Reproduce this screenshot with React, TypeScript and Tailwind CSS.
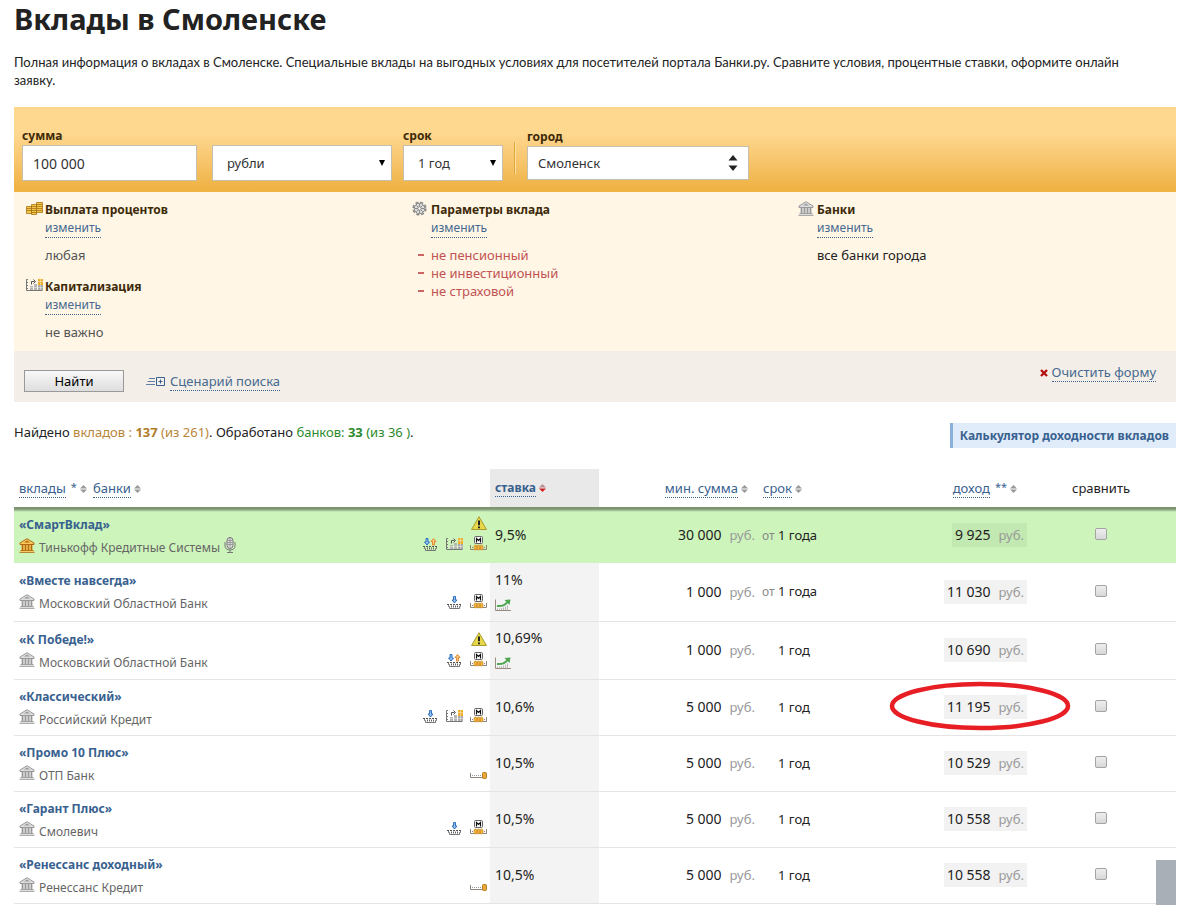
import { useState } from 'react';
import type { ReactNode } from 'react';

type Badge = 'refill' | 'refillWithdraw' | 'capital' | 'monthly' | 'atEnd';

interface Deposit {
  id: number;
  name: string;
  bank: string;
  badges: Badge[];
  warning?: boolean;
  rate: string;
  growing?: boolean;
  minSum: string;
  from?: boolean;
  term: string;
  income: string;
  special?: boolean;
  circled?: boolean;
}

const deposits: Deposit[] = [
  { id: 1, name: '«СмартВклад»', bank: 'Тинькофф Кредитные Системы', badges: ['refillWithdraw', 'capital', 'monthly'], warning: true, rate: '9,5%', minSum: '30 000', from: true, term: '1 года', income: '9 925', special: true },
  { id: 2, name: '«Вместе навсегда»', bank: 'Московский Областной Банк', badges: ['refill', 'monthly'], rate: '11%', growing: true, minSum: '1 000', from: true, term: '1 года', income: '11 030' },
  { id: 3, name: '«К Победе!»', bank: 'Московский Областной Банк', badges: ['refillWithdraw', 'monthly'], warning: true, rate: '10,69%', growing: true, minSum: '1 000', term: '1 год', income: '10 690' },
  { id: 4, name: '«Классический»', bank: 'Российский Кредит', badges: ['refill', 'capital', 'monthly'], rate: '10,6%', minSum: '5 000', term: '1 год', income: '11 195', circled: true },
  { id: 5, name: '«Промо 10 Плюс»', bank: 'ОТП Банк', badges: ['atEnd'], rate: '10,5%', minSum: '5 000', term: '1 год', income: '10 529' },
  { id: 6, name: '«Гарант Плюс»', bank: 'Смолевич', badges: ['refill', 'monthly'], rate: '10,5%', minSum: '5 000', term: '1 год', income: '10 558' },
  { id: 7, name: '«Ренессанс доходный»', bank: 'Ренессанс Кредит', badges: ['atEnd'], rate: '10,5%', minSum: '5 000', term: '1 год', income: '10 558' },
];

export default function App() {
  const [sum, setSum] = useState('100 000');
  const [compared, setCompared] = useState<number[]>([]);

  const toggle = (id: number) =>
    setCompared(list => (list.includes(id) ? list.filter(x => x !== id) : [...list, id]));

  return (
    <div className="bg-white pl-3.5 pr-0.5 text-[13px] leading-[18px] text-[#222]" style={{ fontFamily: "'Noto Sans', 'Open Sans', sans-serif" }}>
      <h1 className="text-[29px] leading-[38px] font-bold">Вклады в Смоленске</h1>
      <p className="mt-[15px]" style={{ fontFamily: "Lato, 'Noto Sans', sans-serif" }}>
        Полная информация о вкладах в Смоленске. Специальные вклады на выгодных условиях для посетителей портала Банки.ру. Сравните условия, процентные ставки, оформите онлайн
        <br />
        заявку.
      </p>

      <form className="mt-[18px]" onSubmit={e => e.preventDefault()}>
        {/* Main filters */}
        <div className="flex h-[85px] items-end bg-linear-to-b from-[#ffd890] from-30% to-[#efb344] to-95% pb-[11px] pl-2">
          <Field id="sum" label="сумма">
            <input
              id="sum"
              value={sum}
              onChange={e => setSum(e.target.value)}
              className="block h-9 w-[175px] border border-[#c4bfae] bg-white pl-2.5 text-[14px] text-[#333]"
            />
          </Field>
          <div className="ml-[15px]">
            <Picker id="currency" label="валюта" options={['рубли', 'доллары', 'евро']} className="w-[180px]" />
          </div>
          <div className="ml-[11px]">
            <Field id="term" label="срок">
              <Picker id="term" options={['1 год', '2 года', '3 года']} className="w-[100px]" />
            </Field>
          </div>
          <div className="mr-[11px] ml-[11px] mb-[7px] h-8 w-0.5 border-l border-[#e2a73c] bg-[#ffe1a0]" />
          <Field id="city" label="город">
            <div className="relative mb-px">
              <select id="city" className="block h-[34px] w-[222px] appearance-none border border-[#c4bfae] bg-white pl-2.5 text-[#333]">
                <option>Смоленск</option>
                <option>Москва</option>
              </select>
              <svg className="pointer-events-none absolute top-[9px] right-[11px]" width="10" height="16" viewBox="0 0 10 16" fill="#222">
                <path d="M5 0 9.500 5.500H.5zM.5 10.500h9L5 16z" />
              </svg>
            </div>
          </Field>
        </div>

        {/* Extra filters */}
        <div className="grid grid-cols-3 bg-[#fff6e6] pt-[9px] pr-1 pb-2.5">
          <div className="pl-3">
            <Filter icon={<CoinsIcon />} title="Выплата процентов">
              <p className="text-[#555]">любая</p>
            </Filter>
            <div className="mt-[14px]">
              <Filter icon={<CapitalIcon />} title="Капитализация">
                <p className="text-[#555]">не важно</p>
              </Filter>
            </div>
          </div>
          <div className="pl-3">
            <Filter icon={<GearIcon />} title="Параметры вклада">
              <ul className="text-[#c25353]">
                {['не пенсионный', 'не инвестиционный', 'не страховой'].map(item => (
                  <li key={item} className="-ml-[13px] flex items-center">
                    <span className="mr-[7px] h-0.5 w-1.5 bg-[#c96565]" />
                    {item}
                  </li>
                ))}
              </ul>
            </Filter>
          </div>
          <div className="pl-3">
            <Filter icon={<BankIcon />} title="Банки">
              <p>все банки города</p>
            </Filter>
          </div>
        </div>

        <div className="flex h-[51px] items-start bg-[#f3efe8] pr-5 pl-2.5">
          <button type="submit" className="mt-[19px] h-[22px] w-[100px] border border-[#999] bg-linear-to-b from-[#f8f8f8] to-[#dedede] leading-5 text-black">
            Найти
          </button>
          <div className="mt-[21px] ml-[22px] flex items-center gap-1">
            <ScenarioIcon />
            <DottedLink>Сценарий поиска</DottedLink>
          </div>
          <div className="mt-3 ml-auto flex items-center gap-1">
            <svg width="8" height="8" viewBox="0 0 8 8" stroke="#b51010" strokeWidth="2.400">
              <path d="M1 1 7 7M7 1 1 7" />
            </svg>
            <DottedLink>Очистить форму</DottedLink>
          </div>
        </div>
      </form>

      <div className="mt-[21px] flex items-start justify-between">
        <p>
          Найдено <span className="text-[#b9853a]">вкладов : <b className="text-[#b07d2a]">137</b> (из 261)</span>. Обработано{' '}
          <span className="text-[#2c8a2c]">банков: <b>33</b> (из 36 )</span>.
        </p>
        <a href="#calculator" className="border-l-3 border-[#8cb0dd] bg-[#e1ecfb] pt-px pr-[7px] pl-[7px] text-[12px] leading-6 font-bold text-[#38618f]">
          Калькулятор доходности вкладов
        </a>
      </div>

      <table className="mt-[21px] w-full table-fixed border-collapse">
        <colgroup>
          <col />
          <col className="w-[76px]" />
          <col className="w-[109px]" />
          <col className="w-[161px]" />
          <col className="w-[130px]" />
          <col className="w-[137px]" />
          <col className="w-[149px]" />
        </colgroup>
        <thead>
          <tr className="h-[38px] text-left">
            <th className="pl-[5px] font-normal" colSpan={2}>
              <SortLink mark="*">вклады</SortLink>
              <span className="ml-1.5"><SortLink>банки</SortLink></span>
            </th>
            <th className="bg-[#e9e9e9] pl-[5px] text-[12px] font-bold"><SortLink active>ставка</SortLink></th>
            <th className="pr-3 text-right font-normal"><SortLink>мин. сумма</SortLink></th>
            <th className="pl-[3px] font-normal"><SortLink>срок</SortLink></th>
            <th className="pr-2.5 text-right font-normal"><SortLink mark="**">доход</SortLink></th>
            <th className="pr-px text-center font-normal">сравнить</th>
          </tr>
        </thead>
        <tbody>
          {deposits.map(d => (
            <tr
              key={d.id}
              className={
                d.special
                  ? 'h-14 bg-[#cdf5bb] bg-linear-to-b from-[#7d9473] from-[2px] to-[#cdf5bb] to-[5px]'
                  : d.growing
                    ? 'h-[58px] border-b border-[#e4e4e4]'
                    : 'h-14 border-b border-[#e4e4e4]'
              }
            >
              <td className={`pl-[5px] align-top ${d.growing || d.special ? 'pt-[9px]' : 'pt-2'}`}>
                <a href={`#deposit-${d.id}`} className="block w-fit text-[12px] font-bold text-[#38618f]">{d.name}</a>
                <div className="mt-1 flex h-5 items-center gap-1 text-[12px] whitespace-nowrap text-[#666]">
                  <span className="mb-1.5"><BankIcon gold={d.special} /></span>
                  {d.bank}
                  {d.special && <span className="mb-1.5"><MicIcon /></span>}
                </div>
              </td>
              <td className="pr-[3px] pb-3 align-bottom">
                <div className="flex flex-col items-end gap-1.5">
                  {d.warning && <WarningIcon />}
                  <div className="flex items-end gap-[7px]">
                    {d.badges.map(b => <BadgeIcon key={b} type={b} />)}
                  </div>
                </div>
              </td>
              <td className={d.special ? 'pl-[5px] text-[14px]' : 'bg-[#f3f3f3] pl-[5px] text-[14px]'}>
                <div>{d.rate}</div>
                {d.growing && <GrowthIcon />}
              </td>
              <td className="pr-[5px] text-right">
                <span className="text-[14px]">{d.minSum}</span>
                <span className="ml-2 text-[#999]">руб.</span>
              </td>
              <td className="whitespace-nowrap">
                <span className="inline-block w-[18px] pl-0.5 text-[12px] text-[#888]">{d.from && 'от'}</span>
                {d.term}
              </td>
              <td className="text-right">
                <span className={`relative inline-block p-[3px] leading-[17px] ${d.special ? 'bg-[#c2e9b1]' : 'bg-[#f2f2f2]'}`}>
                  <span className="text-[14px]">{d.income}</span>
                  <span className="ml-2 text-[#999]">руб.</span>
                  {d.circled && (
                    <svg className="pointer-events-none absolute -top-[14px] -right-11" width="182" height="50" viewBox="0 0 182 50" fill="none">
                      <ellipse cx="91" cy="25" rx="88" ry="22" stroke="#e81e25" strokeWidth="4.500" />
                    </svg>
                  )}
                </span>
              </td>
              <td className="pr-0.5 text-center">
                <input
                  type="checkbox"
                  aria-label={`Сравнить ${d.name}`}
                  checked={compared.includes(d.id)}
                  onChange={() => toggle(d.id)}
                  className="inline-block h-3 w-3 appearance-none rounded-xs border border-[#a3a3a3] bg-linear-to-b from-[#eee] to-[#d8d8d8] checked:bg-[#38618f]"
                />
              </td>
            </tr>
          ))}
        </tbody>
      </table>

      <div className="fixed right-0.5 bottom-px h-[45px] w-5 bg-[#a9afb7]" />
    </div>
  );
}

function Field({ id, label, children }: { id: string; label: string; children: ReactNode }) {
  return (
    <div>
      <label htmlFor={id} className="block text-[12px] leading-[18px] font-bold text-[#3d2a08]">{label}</label>
      {children}
    </div>
  );
}

function Picker({ id, label, options, className }: { id: string; label?: string; options: string[]; className: string }) {
  return (
    <div className={`relative ${className}`}>
      <select id={id} aria-label={label} className="block h-9 w-full appearance-none border border-[#c4bfae] bg-white pl-3.5 text-[#333]">
        {options.map(o => <option key={o}>{o}</option>)}
      </select>
      <svg className="pointer-events-none absolute top-[15px] right-[7px]" width="6" height="6" viewBox="0 0 6 6">
        <path d="M0 0h6L3 6z" />
      </svg>
    </div>
  );
}

function Filter({ icon, title, children }: { icon: ReactNode; title: string; children: ReactNode }) {
  return (
    <div className="flex">
      <div className="w-[19px] shrink-0">{icon}</div>
      <div>
        <h2 className="text-[12px] font-bold text-[#3d2a08]">{title}</h2>
        <div className="text-[12px]"><DottedLink>изменить</DottedLink></div>
        <div className="mt-2">{children}</div>
      </div>
    </div>
  );
}

function DottedLink({ children }: { children: ReactNode }) {
  return (
    <a href="#form" className="block w-fit border-b border-dotted border-[#38618f] leading-[18px] text-[#47698f]">{children}</a>
  );
}

function SortLink({ children, mark, active }: { children: ReactNode; mark?: string; active?: boolean }) {
  return (
    <span className="inline-flex items-center gap-[3px] text-[#38618f]">
      <a href="#sort" className="border-b border-dotted border-[#38618f] leading-[17px]">{children}</a>
      {mark && <span className="mb-1 ml-0.5 text-[11px] leading-[13px]">{mark}</span>}
      <svg width="7" height="8" viewBox="0 0 7 8">
        <path d="M3.500 0 7 3.500H0z" fill={active ? '#b98d8d' : '#999'} />
        <path d="M0 4.500h7L3.500 8z" fill={active ? '#cc2222' : '#999'} />
      </svg>
    </span>
  );
}

function BankIcon({ gold }: { gold?: boolean }) {
  const line = gold ? '#b06a10' : '#999';
  const fill = gold ? '#f8c85c' : '#ddd';
  return (
    <svg width="16" height="15" viewBox="0 0 16 15">
      <path d="M8 .7 15 5v1.500H1V5z" fill={fill} stroke={line} />
      <path d="M5 4.500 8 2.600l3 1.900z" fill={line} />
      <path d="M2.500 7h11v5h-11z" fill={fill} />
      <path d="M3.500 7v5M6.500 7v5M9.500 7v5M12.500 7v5" stroke={line} strokeWidth="1.500" />
      <path d="M1.500 12.500h13M.5 14.300h15" stroke={line} />
      <path d="M1 13.400h14" stroke={fill} />
    </svg>
  );
}

function MicIcon() {
  return (
    <svg width="12" height="16" viewBox="0 0 12 16" fill="none" stroke="#777">
      <rect x="3" y=".5" width="6" height="11" rx="3" fill="#ddd" />
      <path d="M3.500 3.500h5M3.500 5.500h5M3.500 7.500h5M6 .5v10" strokeWidth=".6" />
      <path d="M1 5v4c0 2.500 2 4 5 4s5-1.500 5-4V5M6 13v2M3 15.500h6" />
    </svg>
  );
}

function CoinsIcon() {
  return (
    <svg className="mt-px" width="17" height="13" viewBox="0 0 17 13" fill="#f3c64c" stroke="#a87412" strokeWidth=".8">
      <path d="M.5 4.500h5v7h-5zM5.500 2.500h5v10h-5zM10.500.5h6v10h-6z" />
      <path d="M.5 6.500h5M.5 8.500h5M5.500 4.500h5M5.500 6.500h5M5.500 8.500h5M5.500 10.500h5M10.500 2.500h6M10.500 4.500h6M10.500 6.500h6M10.500 8.500h6" />
    </svg>
  );
}

function GearIcon() {
  return (
    <svg width="15" height="15" viewBox="0 0 15 15" fill="none" stroke="#888">
      <circle cx="7.500" cy="7.500" r="6.300" strokeWidth="1.600" strokeDasharray="3 1.950" />
      <circle cx="7.500" cy="7.500" r="5.200" fill="#e0e0e0" />
      <path d="M7.500 3v9M3 7.500h9M4.300 4.300l6.400 6.400M10.700 4.300l-6.400 6.400" />
      <circle cx="7.500" cy="7.500" r="1.700" fill="#fff" />
    </svg>
  );
}

function CapitalIcon() {
  return (
    <svg width="17" height="14" viewBox="0 0 17 14" fill="none">
      <path d="M2 1.500H.5v11h16M.5 4.500H2M.5 7.500H2M.5 10.500H2" stroke="#777" />
      <path d="M4 8h3v4H4zM8 6h3v6H8z" fill="#b5b5b5" />
      <path d="M12 7h5v5h-5z" fill="#aaa" />
      <path d="M12 1h5v6h-5z" fill="#eeb02c" />
      <path d="M4 9.500h13M12 3.500h5M14.500 1v11" stroke="#fff" strokeWidth=".4" />
      <path d="M5.500 6.500v-3h3M7.500 1.500l2 2-2 2" stroke="#555" />
    </svg>
  );
}

function ScenarioIcon() {
  return (
    <svg width="20" height="10" viewBox="0 0 20 10" fill="none" stroke="#38618f">
      <path d="M3 1.500h6M1.500 4.500H9M0 7.500h9" strokeWidth=".8" />
      <path d="M10.500.5h8v8h-8zM14.500 2.500v4M12.500 4.500h4" />
    </svg>
  );
}

function WarningIcon() {
  return (
    <svg width="16" height="14" viewBox="0 0 16 14">
      <path d="M8 .7 15.500 13.500H.5z" fill="#e6d84a" stroke="#a99b2c" strokeLinejoin="round" />
      <path d="M8 4.500v4.700M8 10.500v1.800" stroke="#222" strokeWidth="2" />
    </svg>
  );
}

function GrowthIcon() {
  return (
    <svg className="mt-2.5 mb-0.5" width="16" height="12" viewBox="0 0 16 12" fill="none">
      <path d="M.5.5v11H16" stroke="#9a8b80" />
      <path d="M2.500 9.500V11M4.500 9.500V11M6.500 9V11M8.500 8.500V11M10.500 7.500V11M12.500 6.500V11" stroke="#bbb" />
      <path d="M2 7c5 .5 8-.5 10.500-4" stroke="#4fa64f" strokeWidth="2" />
      <path d="M9.500 1 15.500.5 14.500 6z" fill="#4fa64f" />
    </svg>
  );
}

function BadgeIcon({ type }: { type: Badge }) {
  if (type === 'capital') return <CapitalIcon />;

  if (type === 'atEnd') {
    return (
      <svg width="17" height="7" viewBox="0 0 17 7" fill="none">
        <path d="M.5 1v4.500H13" stroke="#8f8577" />
        <path d="M2 3.500h10" stroke="#999" strokeDasharray="1 1" />
        <rect x="12.500" y=".5" width="4" height="6" rx="1" fill="#e8a93a" stroke="#b97a1a" />
      </svg>
    );
  }

  if (type === 'monthly') {
    return (
      <svg width="17" height="15" viewBox="0 0 17 15" fill="none">
        <path d="M.5 9v4.500h16V9" stroke="#8f8577" />
        <path d="M2 11.500h13" stroke="#8f8577" strokeDasharray="1 1" />
        <rect x="4.500" y=".5" width="8" height="7" rx="1" fill="#fff" stroke="#666" />
        <path d="M6.500 6.500v-4l2 2 2-2v4" stroke="#111" strokeWidth="1.200" />
        <path d="M4 10.500c0-2 3-2 3 0v2c0 2-3 2-3 0zM7 10.500c0-2 3-2 3 0v2c0 2-3 2-3 0zM10 10.500c0-2 3-2 3 0v2c0 2-3 2-3 0z" fill="#f2b544" stroke="#c08020" strokeWidth=".6" />
      </svg>
    );
  }

  const both = type === 'refillWithdraw';
  return (
    <svg className="mr-px" width="15" height="13" viewBox="0 0 15 13" fill="none">
      <path d="M0 8.500h15" stroke="#555" strokeDasharray="2 1" />
      <path d="M1.500 9v1.500h1v2h10v-2h1V9" stroke="#777" />
      <path d="M4 10.500h8" stroke="#666" strokeWidth="2" strokeDasharray="1 1" />
      <path
        d={both ? 'M3 .5h2V4h1.500L4 7 1.500 4H3z' : 'M6.500.5h2V4H10L7.500 7 5 4h1.500z'}
        fill="#8fbdf0"
        stroke="#2f72bd"
      />
      {both && <path d="M9.500 7h2V3.500H13L10.500.5 8 3.500h1.500z" fill="#fbc98a" stroke="#e08a2c" />}
    </svg>
  );
}
